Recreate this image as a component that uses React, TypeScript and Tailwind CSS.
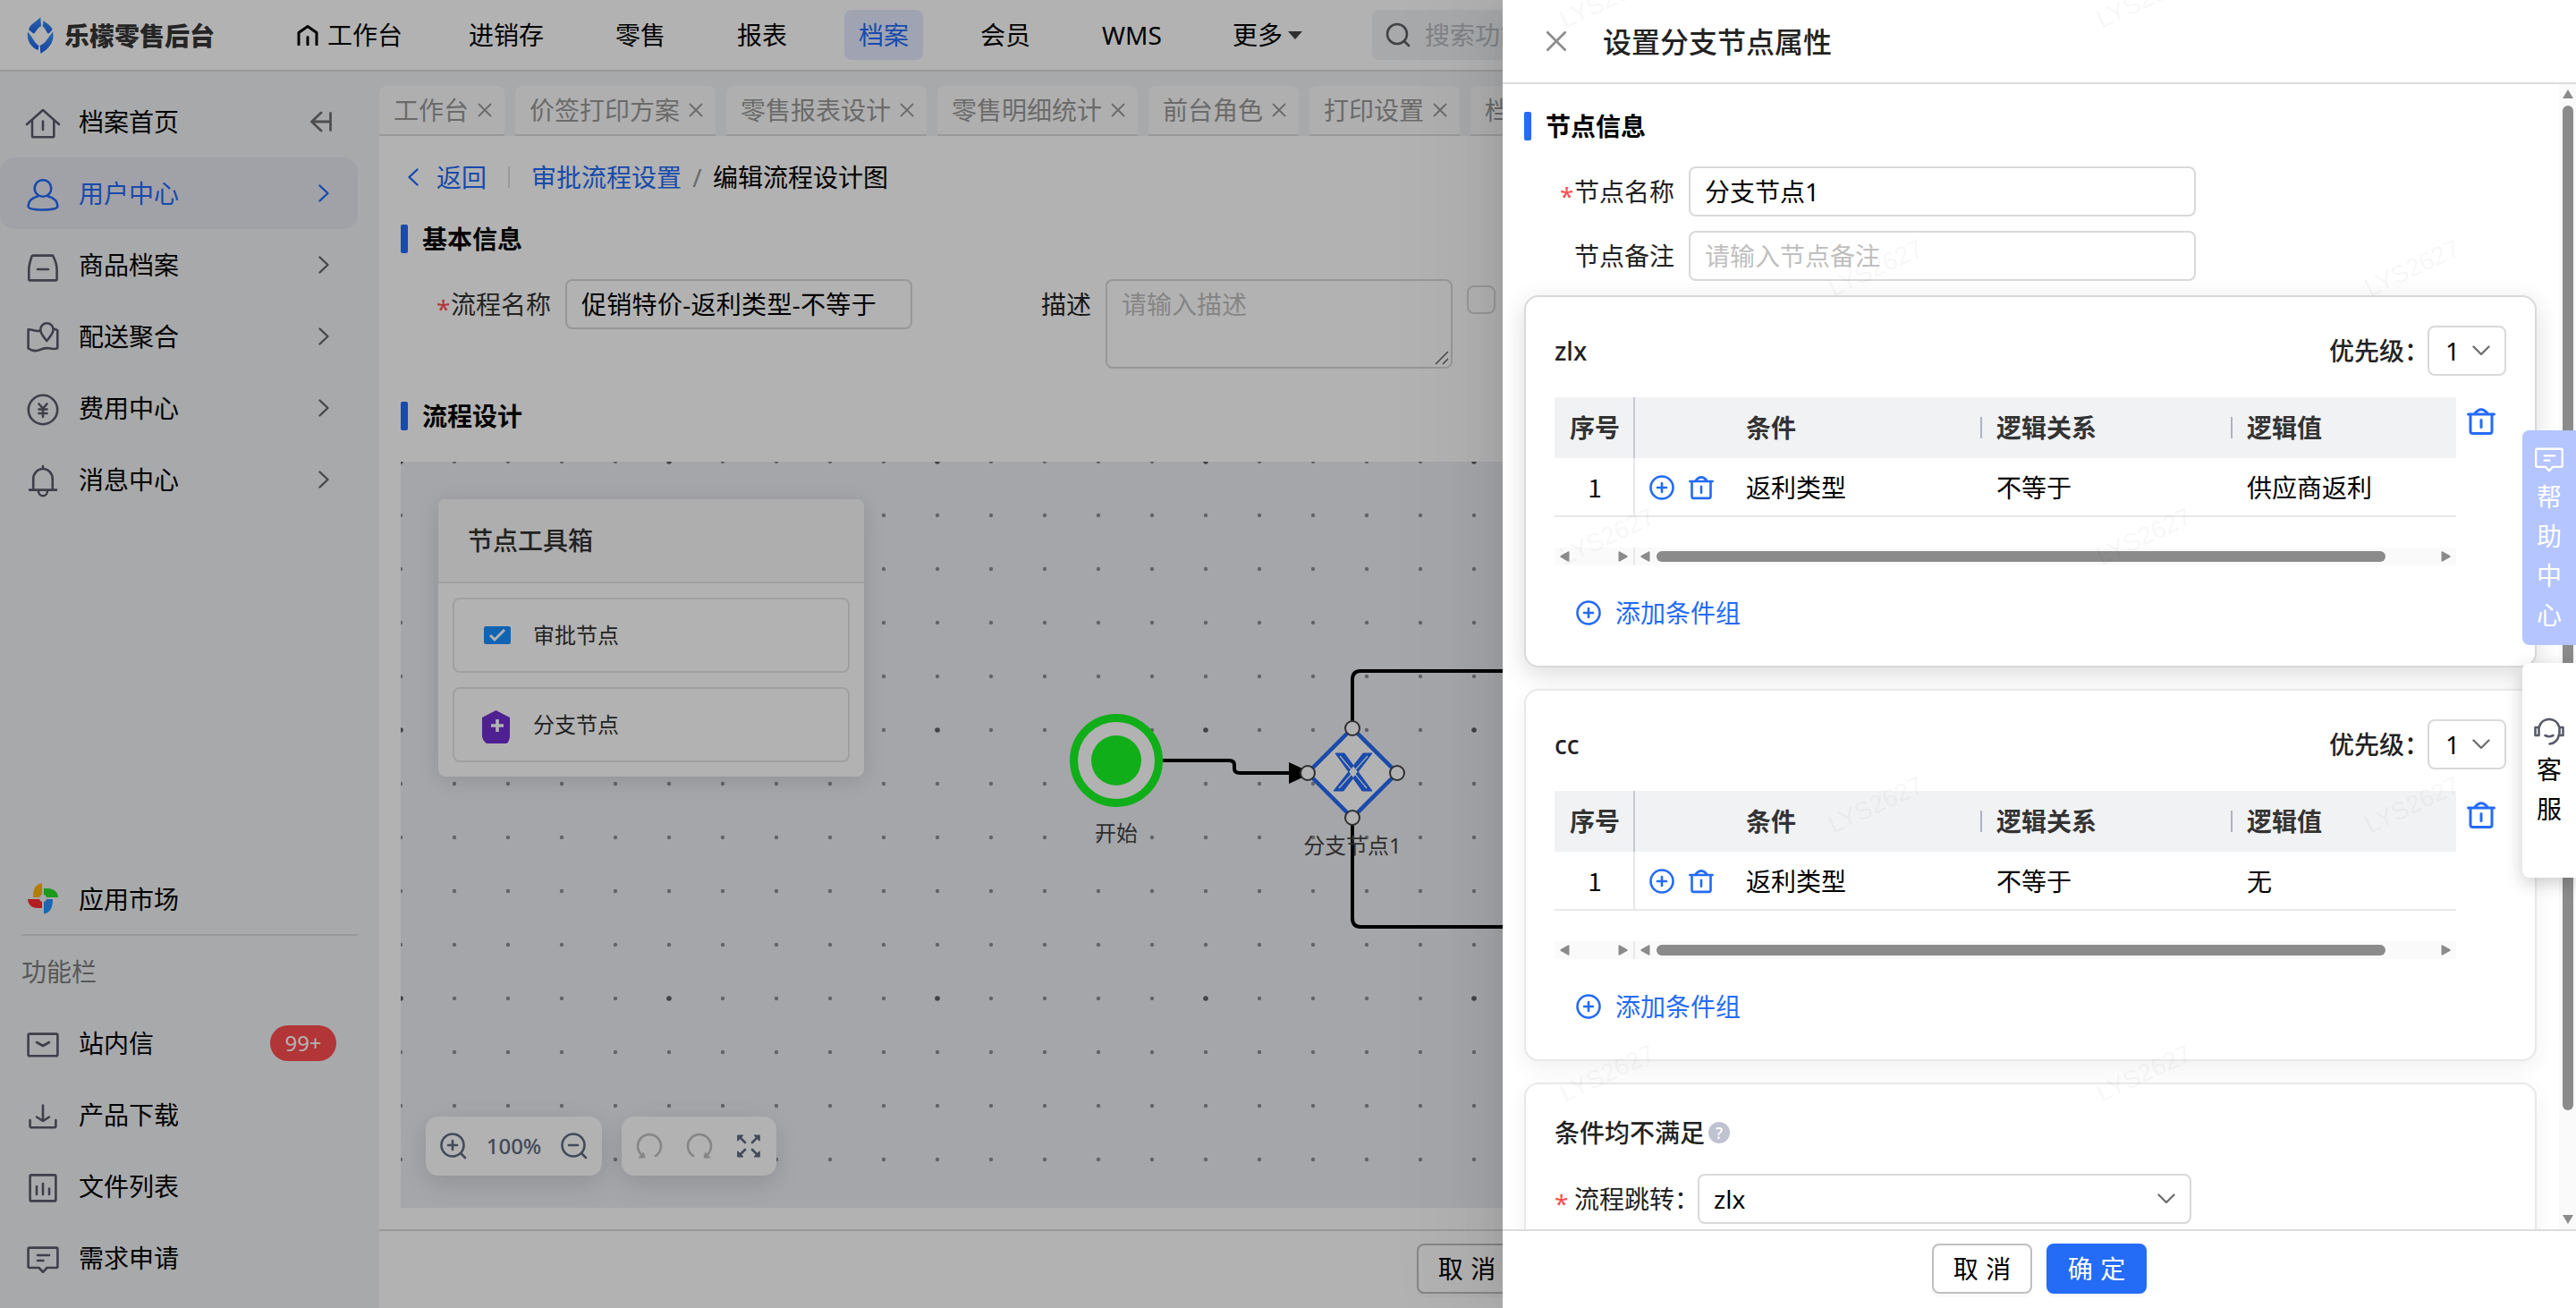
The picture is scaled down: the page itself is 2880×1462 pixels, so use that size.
import { FC, ReactNode } from 'react';

type IconProps = { className?: string };

const Svg: FC<{ className?: string; box?: string; sw?: number; children: ReactNode }> = ({
  className = 'w-10 h-10',
  box = '0 0 40 40',
  sw = 2.6,
  children,
}) => (
  <svg
    className={`shrink-0 ${className}`}
    viewBox={box}
    fill="none"
    stroke="currentColor"
    strokeWidth={sw}
    strokeLinecap="round"
    strokeLinejoin="round"
  >
    {children}
  </svg>
);

const LogoIcon = () => (
  <svg className="w-[30px] h-[41px] shrink-0" viewBox="90 58 90 124">
    <defs>
      <linearGradient id="logo" x1="0" y1="0" x2="0" y2="1">
        <stop offset="0" stopColor="#3a97f2" />
        <stop offset="1" stopColor="#205fe6" />
      </linearGradient>
    </defs>
    <g fill="url(#logo)">
      <path d="M136 59C122 74 98 84 96 101L112 114C120 112 122 97 138 88Z" />
      <path d="M146 70C158 80 173 88 176 101L163 115C154 110 155 98 143 90Z" />
      <path d="M93 108C88 137 103 160 128 170L130 154C118 149 114 134 93 108Z" />
      <path d="M178 108C184 140 165 166 136 181L134 154C152 149 156 134 178 108Z" />
    </g>
  </svg>
);

const HomeIcon = () => (
  <Svg>
    <path d="M2 23L20 7L38 23" />
    <path d="M8 19V36Q8 37.3 9.3 37.3H31Q32.3 37.3 32.3 36V19M20 19.5V29" />
  </Svg>
);
const UserIcon = () => (
  <Svg>
    <circle cx="20" cy="14.5" r="9.3" />
    <path d="M14 23.5C7 25.5 3.6 29.5 3.6 34.5C3.6 37.5 11 38.5 20 38.5S36.4 37.5 36.4 34.5C36.4 29.5 33 25.5 26 23.5" />
  </Svg>
);
const GoodsIcon = () => (
  <Svg>
    <path d="M9 9.6H31C34 15 35.6 20 35.6 26V36Q35.6 37.4 34.3 37.4H5.7Q4.3 37.4 4.3 36V26C4.3 20 6 15 7.5 10.5Q8 9.6 9 9.6ZM14 25H26" />
  </Svg>
);
const DeliveryIcon = () => (
  <Svg>
    <path d="M17 13.5C12.5 15.5 9 12 3.6 12.3V33.5Q9 37 14 35.8C20 34 22 32.5 27 33.3C30 34 33 34.5 36.3 33.3V13.3Q34 11.5 32 12" />
    <path d="M24.3 25C20 20 17.2 16 17.2 12.5A7.2 7.2 0 0 1 31.6 12.5C31.6 16 28.5 20 24.3 25Z" />
  </Svg>
);
const FeeIcon = () => (
  <Svg>
    <circle cx="20" cy="22" r="16.2" />
    <path d="M15.5 15.5L20 20.5L24.5 15.5M20 21V30M15.5 21.5H24.5M15.5 26H24.5" />
  </Svg>
);
const BellIcon = () => (
  <Svg>
    <path d="M20 5V8M9.2 31V19.5A10.8 11.5 0 0 1 30.8 19.5V31M5 31.6H35M15 33A5 5.2 0 0 0 25 33" />
  </Svg>
);
const MarketIcon = () => (
  <svg className="w-10 h-10 shrink-0" viewBox="0 0 40 40">
    <path d="M19 2.3C12 3 9 8 9 18H19Z" fill="#ffb400" />
    <path d="M21 8H25C33 8.5 36.6 12 37 18H21Z" fill="#2bdc2b" />
    <path d="M21 20H31C31 28.5 29 35 21 36.5Z" fill="#2c93ff" />
    <path d="M3 20H19V30H14C7 30 3.5 26 3 20Z" fill="#ff2c30" />
    <circle cx="20" cy="19" r="4" fill="#f0f0f0" />
  </svg>
);
const InboxIcon = () => (
  <Svg>
    <rect x="3.6" y="9.6" width="32.8" height="24.6" rx="1.5" />
    <path d="M13 19L20 23L27 19" />
  </Svg>
);
const DownloadIcon = () => (
  <Svg>
    <path d="M20 9.5V27M13 22.5L20 27L27 22.5M5.6 26V32.5Q5.6 34.3 7.4 34.3H32.6Q34.4 34.3 34.4 32.5V26" />
  </Svg>
);
const FileIcon = () => (
  <Svg>
    <rect x="5.6" y="7.4" width="28.8" height="29" rx="1.5" />
    <path d="M13 20V29M20 17V29M27 22.5V29" />
  </Svg>
);
const MessageIcon: FC<IconProps> = ({ className }) => (
  <Svg className={className}>
    <path d="M5 8.6H35Q36.4 8.6 36.4 10V29.5Q36.4 31 35 31H24.5L20 35.8L15.5 31H5Q3.6 31 3.6 29.5V10Q3.6 8.6 5 8.6ZM14 17H27M14 23H20.5" />
  </Svg>
);
const TrashIcon: FC<IconProps> = ({ className }) => (
  <Svg className={className} box="0 0 32 32" sw={3}>
    <path d="M1.5 8H30.5M9 7Q16 -1.5 23 7M4 8V27Q4 29.5 6.5 29.5H25.5Q28 29.5 28 27V8M16 14.5V22.5" />
  </Svg>
);
const PlusCircle = () => (
  <Svg className="w-7 h-7" box="0 0 28 28">
    <circle cx="14" cy="14" r="12.5" />
    <path d="M14 9V19M9 14H19" />
  </Svg>
);
const Chevron: FC<IconProps> = ({ className = '' }) => (
  <Svg className={`w-3 h-5 ${className}`} box="0 0 12 20" sw={2.4}>
    <path d="M1.5 1.5L10.5 10L1.5 18.5" />
  </Svg>
);
const ChevronDown: FC<IconProps> = ({ className = '' }) => (
  <Svg className={`w-5 h-3 text-[#707070] ${className}`} box="0 0 20 12" sw={2.4}>
    <path d="M1.5 1.5L10 10L18.5 1.5" />
  </Svg>
);
const CloseIcon: FC<IconProps> = ({ className = '' }) => (
  <Svg className={className} box="0 0 16 16" sw={1.8}>
    <path d="M1.5 1.5L14.5 14.5M14.5 1.5L1.5 14.5" />
  </Svg>
);
const HeadsetIcon = () => (
  <Svg className="w-9 h-9 text-[#595b6b]" box="0 0 36 36">
    <path d="M7 13A11.5 11.5 0 0 1 29 13M29 22C28 28 24 32 18.5 32.5M2.5 14H6.5V23H2.5ZM33.5 14H29.5V23H33.5ZM13.5 23Q18 25.5 22.5 23" />
  </Svg>
);

const sideItems = [
  { label: '用户中心', icon: <UserIcon />, active: true },
  { label: '商品档案', icon: <GoodsIcon /> },
  { label: '配送聚合', icon: <DeliveryIcon /> },
  { label: '费用中心', icon: <FeeIcon /> },
  { label: '消息中心', icon: <BellIcon /> },
];

const toolItems = [
  { label: '站内信', icon: <InboxIcon />, badge: '99+' },
  { label: '产品下载', icon: <DownloadIcon /> },
  { label: '文件列表', icon: <FileIcon /> },
  { label: '需求申请', icon: <MessageIcon /> },
];

const tabs = ['工作台', '价签打印方案', '零售报表设计', '零售明细统计', '前台角色', '打印设置', '档案首页'];

const Header = () => (
  <header className="h-20 shrink-0 flex items-center bg-white border-b-2 border-[#dcdcdc] text-black">
    <div className="w-[332px] shrink-0 flex items-center pl-[30px] gap-3">
      <LogoIcon />
      <span className="text-[28px] leading-10 font-black text-[#363636] font-['Noto_Sans_CJK_SC',sans-serif]">
        乐檬零售后台
      </span>
    </div>
    <Svg className="w-6 h-6 mr-[10px]" box="0 0 24 24" sw={3}>
      <path d="M2 23V9.5L12 2.5L22 9.5V23M12 14.5V23" />
    </Svg>
    <span className="w-[142px]">工作台</span>
    <nav className="flex items-center gap-12">
      <span className="px-4">进销存</span>
      <span className="px-4">零售</span>
      <span className="px-4">报表</span>
      <span className="h-14 px-4 flex items-center rounded-lg bg-[#e6eaff] text-[#246bf6]">档案</span>
      <span className="px-4">会员</span>
      <span className="px-4 w-[98px]">WMS</span>
      <span className="px-4 flex items-center gap-1.5">
        更多
        <i className="border-x-8 border-x-transparent border-t-[9px] border-t-[#444]" />
      </span>
    </nav>
    <div className="ml-[62px] h-14 w-[420px] rounded-lg bg-[#f0f2f5] flex items-center pl-[15px] gap-4 text-[#b9bcc2]">
      <Svg className="w-7 h-7 text-[#5f6066]" box="0 0 28 28">
        <circle cx="13" cy="13" r="11" />
        <path d="M21 21L26 26" />
      </Svg>
      搜索功能
    </div>
  </header>
);

const Sidebar = () => (
  <aside className="w-[424px] shrink-0 bg-[#f1f3f5] pt-4 flex flex-col text-black">
    <div className="h-20 flex items-center pl-7">
      <span className="text-[#5a5b6b]"><HomeIcon /></span>
      <span className="ml-5">档案首页</span>
      <Svg className="w-6 h-6 ml-[147px] text-[#707070]" box="0 0 24 24" sw={2.8}>
        <path d="M12 2L1.5 12L12 22M2 12H22M22.5 2.5V21.5" />
      </Svg>
    </div>
    {sideItems.map((item) => (
      <div
        key={item.label}
        className={`h-20 w-[400px] flex items-center pl-7 rounded-2xl ${item.active ? 'bg-[#e7e8f1] text-[#246bf6]' : ''}`}
      >
        <span className={item.active ? '' : 'text-[#5a5b6b]'}>{item.icon}</span>
        <span className="ml-5">{item.label}</span>
        <Chevron className={`ml-auto mr-8 ${item.active ? '' : 'text-[#666]'}`} />
      </div>
    ))}
    <div className="mt-auto h-20 mx-6 pl-1 flex items-center border-b-2 border-[#dadbdd]">
      <MarketIcon />
      <span className="ml-5">应用市场</span>
    </div>
    <div className="h-20 pl-6 flex items-center text-[#7d7f80]">功能栏</div>
    {toolItems.map((item) => (
      <div key={item.label} className="h-20 flex items-center pl-7">
        <span className="text-[#5a5b6b]">{item.icon}</span>
        <span className="ml-5">{item.label}</span>
        {item.badge && (
          <span className="ml-auto mr-12 w-[74px] h-10 rounded-full bg-[#ff4d4f] text-white text-2xl leading-10 text-center">
            {item.badge}
          </span>
        )}
      </div>
    ))}
    <div className="h-4" />
  </aside>
);

const SectionTitle: FC<{ children: string }> = ({ children }) => (
  <div className="h-8 flex items-center gap-4 font-bold text-black">
    <i className="w-2 h-8 rounded-xs bg-[#246bf6]" />
    {children}
  </div>
);

const ToolBox = () => (
  <div className="absolute left-[42px] top-[42px] w-[476px] h-[310px] rounded-lg bg-white overflow-hidden shadow-[0_4px_24px_rgba(0,0,0,0.12)]">
    <div className="h-[94px] pl-[33px] flex items-center bg-[#fafafa] border-b-2 border-[#e6e6e6] font-medium text-[#333]">
      节点工具箱
    </div>
    <div className="p-4 flex flex-col gap-4 text-2xl text-[#333]">
      <div className="h-[84px] border-2 border-[#e6e6e6] rounded-lg flex items-center pl-[33px]">
        <svg className="w-[30px] h-5 mr-[25px]" viewBox="0 0 30 20">
          <rect width="30" height="20" rx="2.5" fill="#1890ff" />
          <path d="M7 10L12 15L23 4" fill="none" stroke="#fff" strokeWidth="3" />
        </svg>
        审批节点
      </div>
      <div className="h-[84px] border-2 border-[#e6e6e6] rounded-lg flex items-center pl-[31px]">
        <svg className="w-[31px] h-[37px] mr-[26px] mt-1" viewBox="0 0 31 37">
          <path d="M15.5 0L31 8V29C30.5 33 29 37 27 37H5C2 35 0.5 32 0 29V8Z" fill="#722ed1" />
          <path d="M17 10V24M10 17H24" stroke="#fff" strokeWidth="3.6" />
        </svg>
        分支节点
      </div>
    </div>
  </div>
);

const FlowCanvas = () => (
  <div className="relative h-[834px] bg-[#eceef3] overflow-hidden">
    <svg className="absolute inset-0 w-full h-full">
      <defs>
        <pattern id="dots" width="60" height="60" patternUnits="userSpaceOnUse" x="-30" y="-30">
          <circle cx="30" cy="30" r="2.2" fill="#8e9094" />
        </pattern>
        <pattern id="major" width="300" height="300" patternUnits="userSpaceOnUse" x="-150" y="-150">
          <circle cx="150" cy="150" r="2.8" fill="#5f6063" />
        </pattern>
      </defs>
      <rect width="100%" height="100%" fill="url(#dots)" />
      <rect width="100%" height="100%" fill="url(#major)" />
      <g transform="translate(-448 -516)">
        <g fill="none" stroke="#000" strokeWidth="4">
          <path d="M1300 850H1374Q1380 850 1380 855V859Q1380 864 1386 864H1444" />
          <path d="M1512 812V760Q1512 750 1521 750H1800" />
          <path d="M1512 916V1026Q1512 1036 1521 1036H1800" />
        </g>
        <path d="M1441 852L1467 864L1441 876Z" />
        <circle cx="1248" cy="850" r="47.5" fill="#fff" stroke="#18fa24" strokeWidth="9" />
        <circle cx="1248" cy="850" r="28" fill="#18fa24" />
        <path d="M1512 814L1562 864L1512 914L1462 864Z" fill="#fff" stroke="#246bf6" strokeWidth="4.5" />
        <path d="M1493 842H1503L1534 884H1523ZM1534 842H1524L1491 884H1502Z" fill="#246bf6" stroke="#246bf6" strokeWidth="1" />
        <path d="M1498 845L1528 881M1529 845L1497 881" stroke="#fff" strokeWidth="1.2" />
        <g fill="#fff" stroke="#444" strokeWidth="2">
          <circle cx="1512" cy="814" r="8" />
          <circle cx="1462" cy="864" r="8" />
          <circle cx="1562" cy="864" r="8" />
          <circle cx="1512" cy="914" r="8" />
        </g>
        <g fontSize="24" fill="#444" textAnchor="middle">
          <text x="1248" y="940">开始</text>
          <text x="1512" y="954">分支节点1</text>
        </g>
      </g>
    </svg>
    <ToolBox />
    <div className="absolute left-7 top-[732px] flex gap-[22px] text-[#5f6b80]">
      <div className="w-[197px] h-[66px] rounded-[14px] bg-white flex items-center justify-between px-4 text-2xl font-medium shadow-[0_8px_28px_rgba(0,0,0,0.12)]">
        <Svg className="w-[30px] h-[30px]" box="0 0 30 30">
          <circle cx="14" cy="14" r="12.5" />
          <path d="M23.5 23.5L28 28M14 9V19M9 14H19" />
        </Svg>
        100%
        <Svg className="w-[30px] h-[30px]" box="0 0 30 30">
          <circle cx="14" cy="14" r="12.5" />
          <path d="M23.5 23.5L28 28M9 14H19" />
        </Svg>
      </div>
      <div className="w-[173px] h-[66px] rounded-[14px] bg-white flex items-center justify-between px-4 shadow-[0_8px_28px_rgba(0,0,0,0.12)]">
        <Svg className="w-[30px] h-[30px] text-[#c0c0c0]" box="0 0 30 30">
          <path d="M8 26A13 13 0 1 1 22 26" />
          <path d="M3.5 28L10 28L8.5 22.5Z" fill="currentColor" strokeWidth="1" />
        </Svg>
        <Svg className="w-[30px] h-[30px] text-[#c0c0c0]" box="0 0 30 30">
          <path d="M8 26A13 13 0 1 1 22 26" />
          <path d="M26.5 28L20 28L21.5 22.5Z" fill="currentColor" strokeWidth="1" />
        </Svg>
        <Svg className="w-[30px] h-[30px]" box="0 0 30 30">
          <path d="M5 5L11 11M25 5L19 11M5 25L11 19M25 25L19 19" />
          <path d="M3 3H9L3 9ZM27 3H21L27 9ZM3 27H9L3 21ZM27 27H21L27 21Z" fill="currentColor" strokeWidth="1" />
        </Svg>
      </div>
    </div>
  </div>
);

const Required: FC<IconProps> = ({ className = 'w-4' }) => (
  <span className={`h-14 pt-[5px] leading-[56px] text-[#ff4d4f] ${className}`}>*</span>
);

const Main = () => (
  <main className="flex-1 min-w-0 flex flex-col bg-white">
    <div className="h-[72px] shrink-0 bg-[#f1f3f5] pt-4 flex gap-3 overflow-hidden">
      {tabs.map((tab) => (
        <div
          key={tab}
          className="h-14 shrink-0 pl-4 pr-[14px] flex items-center rounded-t-lg bg-[#fbfbfb] border-b-2 border-[#dcdcdc] text-[#999]"
        >
          {tab}
          <CloseIcon className="w-4 h-4 ml-[10px]" />
        </div>
      ))}
    </div>
    <div className="h-[99px] shrink-0 pl-8 pb-[7px] flex items-center">
      <Chevron className="rotate-180 text-[#246bf6]" />
      <span className="ml-5 text-[#246bf6]">返回</span>
      <i className="ml-6 w-0.5 h-6 bg-[#dcdcdc]" />
      <span className="ml-6 text-[#246bf6]">审批流程设置</span>
      <span className="w-[35px] text-center text-[#999]">/</span>
      <span className="text-black">编辑流程设计图</span>
    </div>
    <div className="px-6 flex flex-col">
      <SectionTitle>基本信息</SectionTitle>
      <div className="mt-[29px] h-[100px] flex pl-10 text-[#333]">
        <Required />
        <span className="leading-[56px] w-32">流程名称</span>
        <div className="w-[388px] h-14 border-2 border-[#d9d9d9] rounded-lg px-4 flex items-center tracking-[0.3px] text-black">
          促销特价-返利类型-不等于
        </div>
        <span className="leading-[56px] ml-[144px] w-[72px] text-[#222]">描述</span>
        <div className="relative w-[388px] h-[100px] border-2 border-[#d9d9d9] rounded-lg px-4 leading-[52px] text-[#bfbfbf]">
          请输入描述
          <svg className="absolute right-0.5 bottom-0.5 w-4 h-4" viewBox="0 0 16 16" stroke="#666" strokeWidth="1.5">
            <path d="M1 15L15 1M9 15L15 9" />
          </svg>
        </div>
        <i className="ml-4 mt-[7px] w-8 h-8 border-2 border-[#d9d9d9] rounded-lg" />
      </div>
      <div className="mt-[37px] mb-[35px]">
        <SectionTitle>流程设计</SectionTitle>
      </div>
      <FlowCanvas />
    </div>
    <div className="mt-6 flex-1 border-t-2 border-[#dcdcdc] pt-[14px] pl-[1160px]">
      <Button>取消</Button>
    </div>
  </main>
);

const Button: FC<{ primary?: boolean; children: string }> = ({ primary, children }) => (
  <button
    className={`w-28 h-14 rounded-lg border-2 flex items-center justify-center shadow-[0_4px_0_rgba(0,0,0,0.02)] ${
      primary ? 'bg-[#246bf6] border-[#246bf6] text-white' : 'bg-white border-[#bfbfbf] text-black'
    }`}
  >
    <span className="tracking-[0.3em] -mr-[0.3em]">{children}</span>
  </button>
);

const ArrowLeft = () => (
  <svg className="w-[11px] h-3" viewBox="0 0 11 12" fill="#8b8b8b">
    <path d="M10.5 1V11Q10.500 12 9 11.500L1 7Q-0.500 6 1 5L9 0.500Q10.500 0 10.500 1Z" />
  </svg>
);
const ArrowRight = () => (
  <span className="flex rotate-180">
    <ArrowLeft />
  </span>
);

const ConditionCard: FC<{ name: string; value: string; active?: boolean }> = ({ name, value, active }) => (
  <section
    className={`h-[416px] border-2 rounded-2xl bg-white px-8 pt-8 ${
      active ? 'border-[#d9d9d9] shadow-[0_8px_28px_rgba(0,0,0,0.14)]' : 'border-[#e8e8e8] shadow-[0_8px_24px_rgba(0,0,0,0.06)]'
    }`}
  >
    <div className="h-14 flex items-center font-medium text-[#222]">
      <span>{name}</span>
      <span className="ml-auto -mr-[2px]">优先级：</span>
      <div className="w-[88px] h-14 border-2 border-[#d9d9d9] rounded-lg flex items-center justify-between pl-[18px] pr-4 font-normal text-black">
        1
        <ChevronDown />
      </div>
    </div>
    <div className="mt-6 flex">
      <div className="w-[1008px]">
        <div className="h-[68px] bg-[#f1f2f4] flex items-center font-bold text-[#333]">
          <span className="w-[90px] h-full pl-0.5 flex items-center justify-center border-r-2 border-[#c5c9d3]">序号</span>
          <span className="w-[108px]" />
          <span className="w-[278px] pl-4">条件</span>
          <span className="w-0.5 h-6 bg-[#adb4c3]" />
          <span className="w-[278px] pl-4">逻辑关系</span>
          <span className="w-0.5 h-6 bg-[#adb4c3]" />
          <span className="pl-4">逻辑值</span>
        </div>
        <div className="h-[66px] flex items-center border-b-2 border-[#e8e8e8] text-black font-['Noto_Sans_CJK_SC',sans-serif]">
          <span className="w-[90px] h-full pl-0.5 flex items-center justify-center border-r-2 border-[#e8e8e8]">1</span>
          <span className="w-[108px] flex items-center pl-4 gap-4 pt-0.5 text-[#246bf6]">
            <PlusCircle />
            <TrashIcon className="w-7 h-7" />
          </span>
          <span className="w-[280px] pl-4">返利类型</span>
          <span className="w-[280px] pl-4">不等于</span>
          <span className="pl-4">{value}</span>
        </div>
        <div className="mt-[34px] h-5 flex bg-[#fafafa]">
          <div className="w-[90px] px-1.5 flex items-center justify-between border-r-2 border-[#e8e8e8]">
            <ArrowLeft />
            <ArrowRight />
          </div>
          <div className="flex-1 px-1.5 flex items-center">
            <ArrowLeft />
            <i className="ml-[7px] w-[815px] h-3 rounded-full bg-[#8b8b8b]" />
            <span className="ml-auto flex"><ArrowRight /></span>
          </div>
        </div>
      </div>
      <span className="ml-3 mt-[11px] text-[#246bf6]"><TrashIcon className="w-8 h-8" /></span>
    </div>
    <div className="mt-[33px] pl-6 h-10 flex items-center gap-4 text-[#246bf6]">
      <PlusCircle />
      添加条件组
    </div>
  </section>
);

const Drawer = () => (
  <div className="absolute right-0 top-0 w-[1200px] h-[1462px] bg-white flex flex-col shadow-[-12px_0_32px_-16px_rgba(0,0,0,0.08),-18px_0_56px_rgba(0,0,0,0.05),-24px_0_96px_32px_rgba(0,0,0,0.03)]">
    <div className="h-[94px] shrink-0 border-b-2 border-[#dcdcdc] flex items-center pl-12">
      <CloseIcon className="w-6 h-6 text-[#8c8c8c]" />
      <span className="ml-10 pt-0.5 text-[32px] font-medium text-[#222]">设置分支节点属性</span>
    </div>
    <div className="h-[1280px] shrink-0 flex overflow-hidden">
      <div className="flex-1 pl-6 pr-[25px] pt-[31px]">
        <SectionTitle>节点信息</SectionTitle>
        <div className="mt-[29px] flex flex-col gap-4 pl-10 text-[#222]">
          <div className="flex h-14 leading-[56px]">
            <Required />
            <span className="w-32">节点名称</span>
            <div className="w-[567px] border-2 border-[#d9d9d9] rounded-lg px-4 leading-[52px] text-black">分支节点1</div>
          </div>
          <div className="flex h-14 leading-[56px] pl-4">
            <span className="w-32">节点备注</span>
            <div className="w-[567px] border-2 border-[#d9d9d9] rounded-lg px-4 leading-[52px] text-[#bfbfbf]">请输入节点备注</div>
          </div>
        </div>
        <div className="mt-4 flex flex-col gap-6">
          <ConditionCard name="zlx" value="供应商返利" active />
          <ConditionCard name="cc" value="无" />
          <section className="h-[240px] border-2 border-[#e8e8e8] rounded-2xl bg-white pl-8 pt-[34px] shadow-[0_8px_24px_rgba(0,0,0,0.06)]">
            <div className="h-10 flex items-center font-medium text-[#222]">
              条件均不满足
              <i className="ml-1 w-6 h-6 rounded-full bg-[#bfc3d1] text-white text-lg leading-6 text-center not-italic">?</i>
            </div>
            <div className="mt-[26px] h-14 flex items-center text-[#222]">
              <Required className="w-[22px]" />
              <span className="w-[138px] whitespace-nowrap">流程跳转：</span>
              <div className="w-[552px] h-14 border-2 border-[#d9d9d9] rounded-lg px-4 flex items-center justify-between text-black">
                zlx
                <ChevronDown />
              </div>
            </div>
          </section>
        </div>
      </div>
      {/* scrollbar */}
      <div className="w-[19px] bg-[#fafafa] flex flex-col items-center py-1.5">
        <i className="border-x-[6px] border-x-transparent border-b-[10px] border-b-[#8b8b8b]" />
        <i className="mt-2 w-3 h-[1123px] rounded-full bg-[#8b8b8b]" />
        <i className="mt-auto border-x-[6px] border-x-transparent border-t-[10px] border-t-[#8b8b8b]" />
      </div>
    </div>
    <div className="flex-1 bg-white border-t-2 border-[#dcdcdc] pt-[14px] flex justify-center gap-4">
      <Button>取消</Button>
      <Button primary>确定</Button>
    </div>
  </div>
);

const FloatButtons = () => (
  <div className="absolute right-0 top-[481px] w-[60px] flex flex-col gap-5">
    <div className="h-60 rounded-l-lg bg-[#b4c5ff] text-white flex flex-col items-center pt-[13px]">
      <MessageIcon className="w-9 h-9" />
      {['帮', '助', '中', '心'].map((c) => (
        <span key={c} className="h-11 leading-[50px]">{c}</span>
      ))}
    </div>
    <div className="h-60 rounded-l-lg bg-white text-black flex flex-col items-center pt-[58px] shadow-[0_6px_20px_rgba(0,0,0,0.2)]">
      <HeadsetIcon />
      <span className="h-11 leading-[50px]">客</span>
      <span className="h-11 leading-[50px]">服</span>
    </div>
  </div>
);

const marks = [
  [597, 0], [1197, 0], [1797, 0], [2397, 0],
  [297, 300], [897, 300], [1497, 300], [2097, 300], [2697, 300],
  [597, 600], [1197, 600], [1797, 600], [2397, 600],
  [297, 900], [897, 900], [1497, 900], [2097, 900], [2697, 900],
  [597, 1200], [1197, 1200], [1797, 1200], [2397, 1200],
];

const Watermark = () => (
  <div className="absolute inset-0 overflow-hidden pointer-events-none font-['Liberation_Sans',sans-serif]">
    {marks.map(([x, y]) => (
      <span
        key={`${x}-${y}`}
        className={`absolute w-30 h-8 leading-8 text-center -rotate-[25deg] ${x > 1680 ? 'text-black/5' : 'text-black/[0.015]'}`}
        style={{ left: x - 60, top: y - 16 }}
      >
        LYS2627
      </span>
    ))}
  </div>
);

export default function App() {
  return (
    <div className="relative w-[2880px] h-[1462px] overflow-hidden flex flex-col bg-white text-[28px] leading-10 font-['Noto_Sans','Noto_Sans_CJK_SC',sans-serif]">
      <Header />
      <div className="flex-1 min-h-0 flex">
        <Sidebar />
        <Main />
      </div>
      <div className="absolute inset-0 bg-black/30" />
      <Drawer />
      <FloatButtons />
      <Watermark />
    </div>
  );
}
